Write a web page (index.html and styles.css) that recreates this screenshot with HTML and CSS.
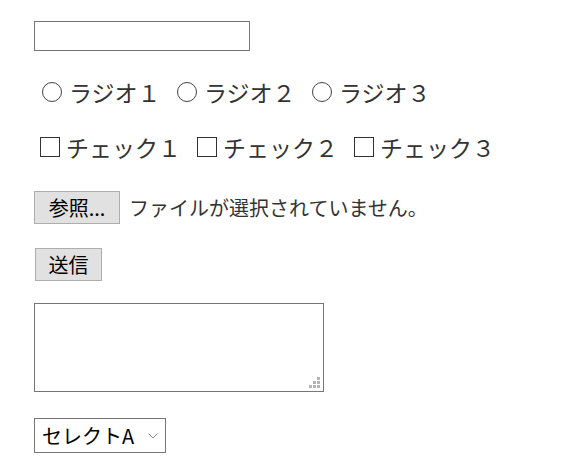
FILE: index.html
```html
<!DOCTYPE html>
<html lang="ja">
<head>
<meta charset="utf-8">
<title>Form</title>
<link rel="stylesheet" href="styles.css">
</head>
<body>
<form class="form">
  <div class="row row-text"><input class="text" type="text"></div>

  <div class="row row-radio">
    <label class="opt opt-radio"><span class="radio"></span><span class="lbl">ラジオ１</span></label>
    <label class="opt opt-radio"><span class="radio"></span><span class="lbl">ラジオ２</span></label>
    <label class="opt opt-radio"><span class="radio"></span><span class="lbl">ラジオ３</span></label>
  </div>

  <div class="row row-check">
    <label class="opt opt-check"><span class="check"></span><span class="lbl">チェック１</span></label>
    <label class="opt opt-check"><span class="check"></span><span class="lbl">チェック２</span></label>
    <label class="opt opt-check"><span class="check"></span><span class="lbl">チェック３</span></label>
  </div>

  <div class="row row-file">
    <button type="button" class="btn btn-file">参照...</button>
    <span class="file-text">ファイルが選択されていません。</span>
  </div>

  <div class="row row-submit">
    <button type="button" class="btn btn-submit">送信</button>
  </div>

  <div class="row row-area">
    <div class="area-wrap">
      <textarea class="area"></textarea>
      <span class="grip"></span>
    </div>
  </div>

  <div class="row row-select">
    <div class="sel-wrap">
      <select class="sel"><option>セレクトA</option></select>
      <svg class="chev" width="10" height="6" viewBox="0 0 10 6"><path d="M0.5 0.5 L5 5 L9.5 0.5" fill="none" stroke="#8a8a8a" stroke-width="1"/></svg>
    </div>
  </div>
</form>
</body>
</html>
```

FILE: styles.css
```css
* { box-sizing: border-box; }
html, body { margin: 0; padding: 0; background: #fff; }
body {
  font-family: "Noto Sans CJK JP", "Noto Sans", sans-serif;
  color: #333;
}
.form { padding-left: 34px; display: flex; flex-direction: column; align-items: flex-start; }
.row { display: flex; align-items: center; }

.row-text { margin-top: 21px; }
.text {
  width: 216px; height: 30px;
  border: 1px solid #767676; border-radius: 0;
  margin: 0; padding: 0 4px; outline: none;
  background: #fff;
}

.row-radio { margin-top: 26px; height: 30px; }
.row-check { margin-top: 25px; height: 30px; }
.opt { display: flex; align-items: center; font-size: 23px; line-height: 30px; color: #333; }
.opt-radio { width: 135px; }
.opt-check { width: 157px; }
.radio {
  width: 20px; height: 20px; margin-left: 8px; margin-right: 7px;
  border: 1.4px solid #444; border-radius: 50%;
}
.check {
  width: 20px; height: 20px; margin-left: 6px; margin-right: 6px;
  border: 1.4px solid #333;
}

.row-file { margin-top: 29px; }
.btn {
  font-family: "Noto Sans CJK JP", sans-serif;
  font-size: 20px; line-height: 31px; color: #000;
  background: #e1e1e1; border: 1px solid #adadad; border-radius: 0;
  padding: 0; margin: 0; height: 33px;
}
.btn-file { width: 86px; }
.file-text { margin-left: 9px; font-size: 20px; color: #333; line-height: 33px; }

.row-submit { margin-top: 24px; }
.btn-submit { width: 67px; margin-left: 1px; }

.row-area { margin-top: 22px; }
.area-wrap { position: relative; width: 290px; height: 89px; }
.area {
  display: block; width: 290px; height: 89px; margin: 0;
  border: 1px solid #767676; border-radius: 0; resize: none; outline: none;
}
.grip {
  position: absolute; right: 4px; bottom: 4px;
  width: 3px; height: 3px; background: #b4b4b4;
  box-shadow: 0 -4px 0 #b4b4b4, 0 -8px 0 #b4b4b4, -4px 0 0 #b4b4b4, -4px -4px 0 #b4b4b4, -8px 0 0 #b4b4b4;
}

.row-select { margin-top: 26px; }
.sel-wrap { position: relative; }
.sel {
  -webkit-appearance: none; appearance: none;
  width: 132px; height: 35px; margin: 0;
  border: 1px solid #767676; border-radius: 0; background: #fff;
  font-family: "Noto Sans CJK JP", sans-serif; font-size: 20px; color: #000;
  padding: 0 0 0 7px; outline: none;
}
.chev { position: absolute; left: 114px; top: 15px; pointer-events: none; }
```
